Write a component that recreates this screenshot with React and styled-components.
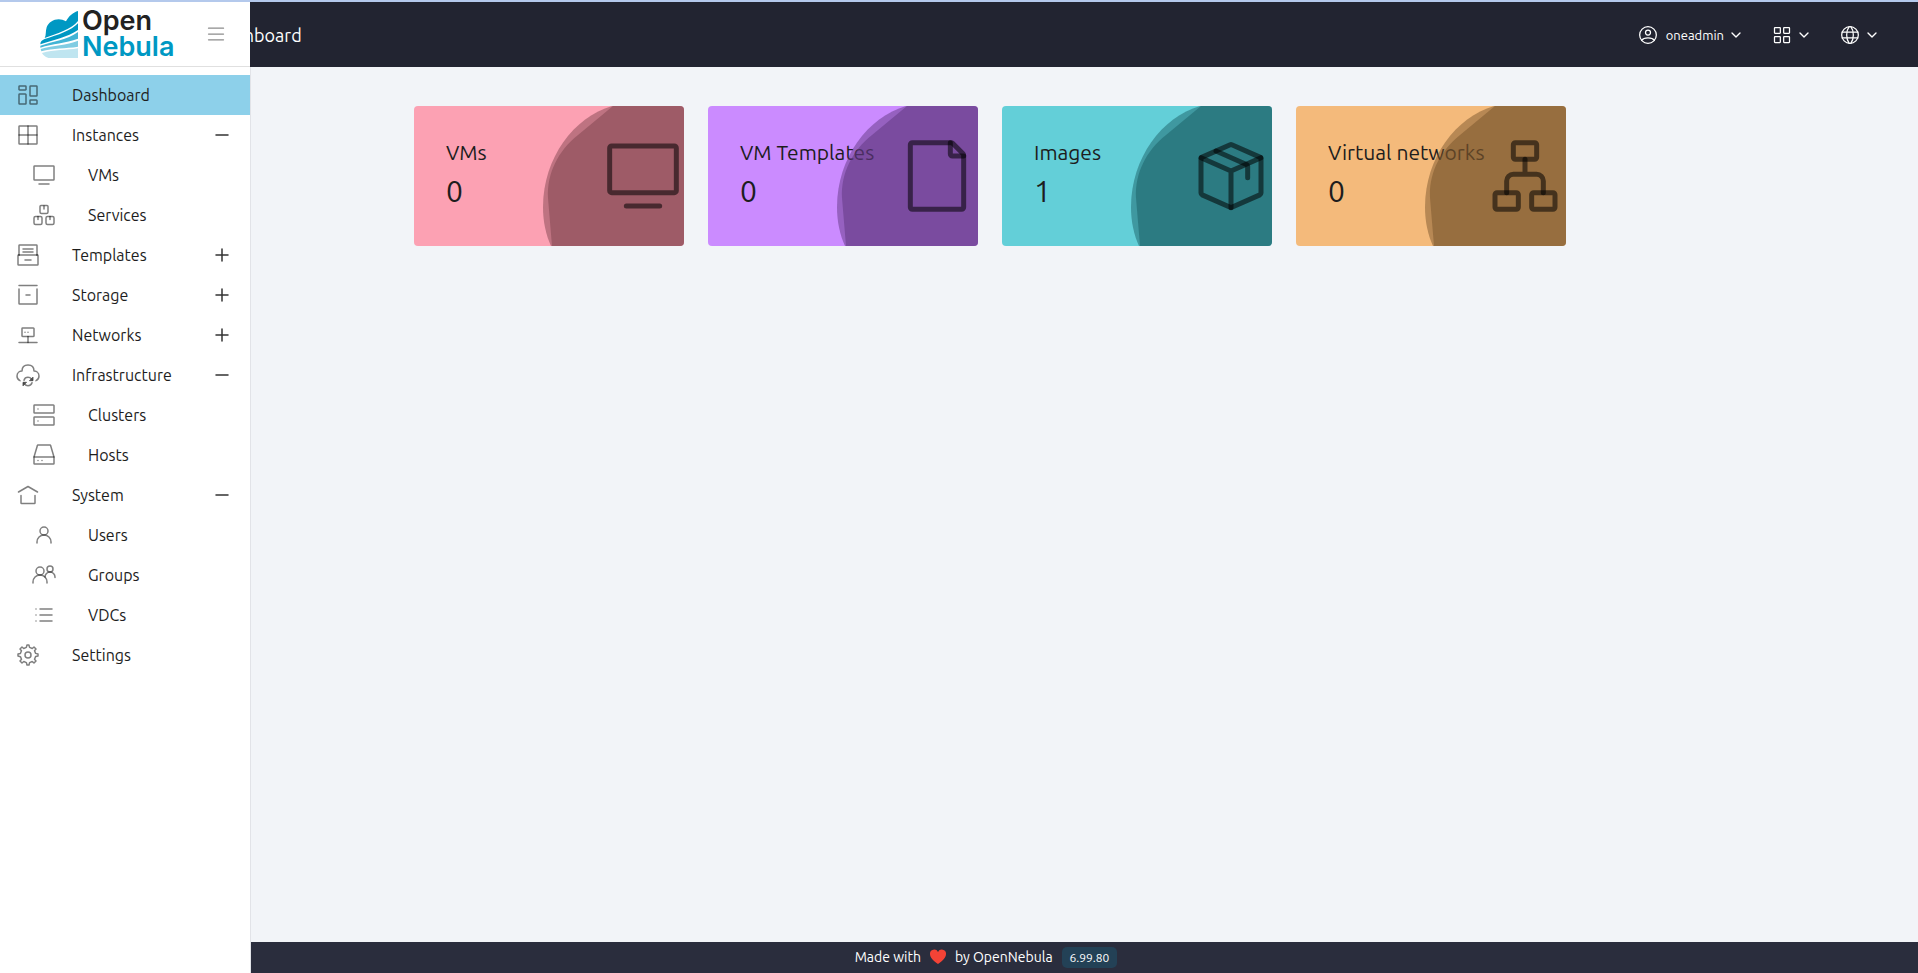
import React from "react";
import styled, { createGlobalStyle } from "styled-components";

const GlobalStyle = createGlobalStyle`
  *, *::before, *::after { box-sizing: border-box; }
  body {
    margin: 0;
    font-family: "Ubuntu", "Noto Sans", sans-serif;
    color: #1d1d1d;
    background: #f2f4f8;
  }
  button { font: inherit; color: inherit; background: none; border: 0; padding: 0; cursor: pointer; }
  a { color: inherit; text-decoration: none; }
  ul { list-style: none; margin: 0; padding: 0; }
`;

const Page = styled.div`
  min-height: 100vh;
  display: flex;
  flex-direction: column;
  padding-left: 62px;
  border-top: 2px solid #b4c9ec;
`;

const Header = styled.header`
  height: 65px;
  margin-left: -62px;
  padding: 0 38px 0 214px;
  display: flex;
  align-items: center;
  justify-content: space-between;
  background: #222431;
  color: #fff;
`;

const Title = styled.h1`
  margin: 0;
  font-size: 18px;
  line-height: 24px;
  font-weight: 400;
`;

const Actions = styled.div`
  display: flex;
  gap: 28px;
`;

const ActionButton = styled.button`
  display: flex;
  align-items: center;
  gap: 4px;
  font-size: 13px;
  line-height: 20px;
`;

const UserName = styled.span`
  margin-left: 4px;
`;

const Main = styled.main`
  flex: 1;
  width: 100%;
  max-width: 1200px;
  margin: 0 auto;
  padding: 39px 24px;
`;

const Cards = styled.div`
  display: grid;
  grid-template-columns: repeat(4, 1fr);
  gap: 24px;
`;

const Card = styled.a`
  position: relative;
  overflow: hidden;
  display: block;
  height: 140px;
  padding: 30px 32px;
  border-radius: 4px;
  background: ${(p) => p.$bg};
`;

const CardTitle = styled.h2`
  margin: 0;
  font-size: 21px;
  line-height: 32px;
  font-weight: 400;
  white-space: nowrap;
`;

const CardValue = styled.p`
  margin: 0;
  font-size: 30px;
  line-height: 46px;
`;

const CardShade = styled.svg`
  position: absolute;
  top: 0;
  right: 0;
  width: 142px;
  height: 140px;
`;

const CardIcon = styled.svg`
  position: absolute;
  top: 30px;
  right: 1px;
  width: 80px;
  height: 80px;
  fill: none;
  stroke: rgba(0, 0, 0, 0.54);
  stroke-width: 1.5;
  stroke-linecap: round;
  stroke-linejoin: round;
`;

const Footer = styled.footer`
  height: 31px;
  margin-left: -62px;
  padding: 0 0 1px 54px;
  display: flex;
  align-items: center;
  justify-content: center;
  background: #2a2d3d;
  color: #fff;
  font-size: 14px;
`;

const Heart = styled.svg`
  width: 16px;
  height: 16px;
  margin: 0 9px;
`;

const Version = styled.span`
  margin-left: 9px;
  padding: 0 8px;
  border-radius: 5px;
  background: #234156;
  font-size: 12px;
  line-height: 21px;
`;

const Sidebar = styled.aside`
  position: fixed;
  top: 2px;
  bottom: 0;
  left: 0;
  width: 250px;
  display: flex;
  flex-direction: column;
  background: #fff;
`;

const SidebarHead = styled.div`
  height: 65px;
  padding: 0 24px 0 40px;
  display: flex;
  align-items: center;
  justify-content: space-between;
  border-bottom: 1px solid #e0e0e0;
`;

const MenuToggle = styled.button`
  display: flex;
`;

const Logo = styled.a`
  display: flex;
  align-items: center;
  gap: 4px;
`;

const LogoMark = styled.svg`
  width: 38px;
  height: 47px;
`;

const LogoText = styled.span`
  display: flex;
  flex-direction: column;
  font-family: "Inter", sans-serif;
  font-size: 27px;
  line-height: 26px;
  font-weight: 600;
  color: ${(p) => p.$color};
`;

const Nav = styled.nav`
  flex: 1;
  box-shadow: 1px 0 0 #e2e3e8;
`;

const Menu = styled.ul`
  padding-top: 8px;
`;

const Item = styled.a`
  height: 40px;
  padding: 0 16px 0 ${(p) => (p.$sub ? 32 : 16)}px;
  display: flex;
  align-items: center;
  gap: 32px;
  background: ${(p) => (p.$active ? "#8dd0ea" : "transparent")};
  font-size: 16px;
  line-height: 24px;
`;

const Label = styled.span`
  flex: 1;
`;

const Svg = styled.svg`
  flex: none;
  width: ${(p) => p.$size}px;
  height: ${(p) => p.$size}px;
  fill: none;
  stroke: ${(p) => p.$tone};
  stroke-width: ${(p) => p.$weight};
  stroke-linecap: round;
  stroke-linejoin: round;
`;

const lines = (...ds) => ds.map((d) => <path key={d} d={d} />);

const icons = {
  dashboard: lines(
    "M3.6 3h5.8a.6.6 0 01.6.6v2.8a.6.6 0 01-.6.6H3.6a.6.6 0 01-.6-.6V3.6a.6.6 0 01.6-.6z",
    "M14.6 17h5.8a.6.6 0 01.6.6v2.8a.6.6 0 01-.6.6h-5.8a.6.6 0 01-.6-.6v-2.8a.6.6 0 01.6-.6z",
    "M14.6 3h5.8a.6.6 0 01.6.6v8.8a.6.6 0 01-.6.6h-5.8a.6.6 0 01-.6-.6V3.6a.6.6 0 01.6-.6z",
    "M3.6 11h5.8a.6.6 0 01.6.6v8.8a.6.6 0 01-.6.6H3.6a.6.6 0 01-.6-.6v-8.8a.6.6 0 01.6-.6z"
  ),
  instances: lines(
    "M3.6 3h16.8a.6.6 0 01.6.6v16.8a.6.6 0 01-.6.6H3.6a.6.6 0 01-.6-.6V3.6a.6.6 0 01.6-.6z",
    "M12 3v18",
    "M3 12h18"
  ),
  monitor: lines(
    "M7 21h10",
    "M2 16.4V3.6a.6.6 0 01.6-.6h18.8a.6.6 0 01.6.6v12.8a.6.6 0 01-.6.6H2.6a.6.6 0 01-.6-.6z"
  ),
  services: lines(
    "M9 2.5h6a1 1 0 011 1V9a1.5 1.5 0 01-1.5 1.5h-5A1.5 1.5 0 018 9V3.500a1 1 0 011-1z",
    "M3.5 13.5h5a1.5 1.5 0 011.5 1.5v5a1.5 1.5 0 01-1.5 1.5h-5A1.5 1.5 0 012 20v-5a1.5 1.5 0 011.5-1.5z",
    "M15.5 13.5h5A1.5 1.5 0 0122 15v5a1.5 1.5 0 01-1.5 1.5h-5A1.5 1.5 0 0114 20v-5a1.5 1.5 0 011.5-1.5z",
    "M12 3v3",
    "M6 13.5v3",
    "M18 13.5v3"
  ),
  templates: lines(
    "M7 6h10",
    "M7 9h10",
    "M9 17h6",
    "M3 12h-.4a.6.6 0 00-.6.6v8.8a.6.6 0 00.6.6h18.8a.6.6 0 00.6-.6v-8.8a.6.6 0 00-.6-.6H21",
    "M3 12V2.6a.6.6 0 01.6-.6h16.8a.6.6 0 01.6.6V12",
    "M3 12h18"
  ),
  storage: lines("M3 6v14.4a.6.6 0 00.6.6h16.8a.6.6 0 00.6-.6V6", "M3 2.500h18", "M10 12h4"),
  networks: lines(
    "M3 19.500h18",
    "M12 19.500v-6",
    "M6.6 5h10.8a.6.6 0 01.6.6v7.3a.6.6 0 01-.6.6H6.6a.6.6 0 01-.6-.6V5.6a.6.6 0 01.6-.6z",
    "M9 9.300h.01",
    "M12 9.300h.01"
  ),
  infrastructure: (
    <>
      {lines(
        "M20 17.600c1.500-.6 3-1.800 3-4.600 0-4-3.300-5-5-5 0-2 0-6-6-6S6 6 6 8c-1.700 0-5 1-5 5 0 2.800 1.500 4 3 4.600",
        "M8 17.200c.5-1.700 2-2.900 4-2.900 1.500 0 2.700.7 3.500 1.700",
        "M16 19.800c-.5 1.700-2 2.900-4 2.900-1.500 0-2.700-.7-3.500-1.700"
      )}
      <path d="M17 14.500v3.200h-3.200zM7 22.500v-3.200h3.200z" fill="#444" stroke="#444" strokeWidth="0.8" />
    </>
  ),
  clusters: lines(
    "M2.6 2h18.800a.6.6 0 01.6.6v6.800a.6.6 0 01-.6.6H2.6a.6.6 0 01-.6-.6V2.600a.6.6 0 01.6-.6z",
    "M2.6 14h18.8a.6.6 0 01.6.6v6.8a.6.6 0 01-.6.6H2.6a.6.6 0 01-.6-.6v-6.8a.6.6 0 01.6-.6z",
    "M6 6h.01",
    "M6 18h.01"
  ),
  hosts: lines(
    "M6 17.500h.01",
    "M10 17.500h.01",
    "M2 14h20v6.400a.6.6 0 01-.6.6H2.6a.6.6 0 01-.6-.6z",
    "M2 14L5.400 2.500a.6.6 0 01.6-.5h12a.6.6 0 01.6.5L22 14"
  ),
  system: lines("M2.500 9L12 3.500l9.500 5.500", "M5 12.500v7.400a.6.6 0 00.6.6h12.8a.6.6 0 00.6-.6v-7.400"),
  user: lines("M5 20v-1a7 7 0 017-7v0a7 7 0 017 7v1", "M12 12a4 4 0 100-8 4 4 0 000 8z"),
  groups: lines(
    "M1 20v-1a7 7 0 017-7v0a7 7 0 017 7v1",
    "M13 14v0a5 5 0 015-5v0a5 5 0 015 5v.5",
    "M8 12a4 4 0 100-8 4 4 0 000 8z",
    "M18 9a3 3 0 100-6 3 3 0 000 6z"
  ),
  list: lines("M8 6h12", "M4 6h.01", "M4 12h.01", "M4 18h.01", "M8 12h12", "M8 18h12"),
  settings: lines(
    "M12 15a3 3 0 100-6 3 3 0 000 6z",
    "M19.622 10.395l-1.097-2.650L20 6l-2-2-1.735 1.483-2.707-1.113L12.935 2h-1.954l-.632 2.401-2.645 1.115L6 4 4 6l1.453 1.789-1.080 2.657L2 11v2l2.401.656L5.516 16.300 4 18l2 2 1.791-1.460 2.606 1.072L11 22h2l.604-2.387 2.651-1.098C16.697 18.831 18 20 18 20l2-2-1.484-1.750 1.098-2.652 2.386-.620V11l-2.378-.605z"
  ),
  plus: lines("M6 12h6m6 0h-6m0 0V6m0 6v6"),
  minus: lines("M6 12h12"),
  menu: lines("M3 5h18", "M3 12h18", "M3 19h18"),
  chevron: lines("M6 9l6 6 6-6"),
  profile: lines(
    "M12 2C6.477 2 2 6.477 2 12s4.477 10 10 10 10-4.477 10-10S17.523 2 12 2z",
    "M4.271 18.346S6.500 15.500 12 15.500s7.730 2.846 7.730 2.846",
    "M12 12a3 3 0 100-6 3 3 0 000 6z"
  ),
  grid: lines(
    "M14 20.400v-5.800a.6.6 0 01.6-.6h5.800a.6.6 0 01.6.6v5.800a.6.6 0 01-.6.6h-5.800a.6.6 0 01-.6-.6z",
    "M3 20.400v-5.800a.6.6 0 01.6-.6h5.800a.6.6 0 01.6.6v5.800a.6.6 0 01-.6.6H3.600a.6.6 0 01-.6-.6z",
    "M14 9.400V3.600a.6.6 0 01.6-.6h5.800a.6.6 0 01.6.6v5.800a.6.6 0 01-.6.6h-5.800a.6.6 0 01-.6-.6z",
    "M3 9.400V3.600a.6.6 0 01.6-.6h5.800a.6.6 0 01.6.6v5.800a.6.6 0 01-.6.6H3.600a.6.6 0 01-.6-.6z"
  ),
  globe: lines(
    "M2 12c0 5.523 4.477 10 10 10s10-4.477 10-10S17.523 2 12 2 2 6.477 2 12z",
    "M13 2.050S16 6 16 12c0 6-3 9.950-3 9.950",
    "M11 21.950S8 18 8 12c0-6 3-9.950 3-9.950",
    "M2.630 15.500h18.740",
    "M2.630 8.500h18.740"
  ),
  page: lines(
    "M4 21.400V2.600a.6.6 0 01.6-.6h11.652a.6.6 0 01.424.176l3.148 3.148A.6.6 0 0120 5.749V21.400a.6.6 0 01-.6.6H4.600a.6.6 0 01-.6-.6z",
    "M16 2v3.400a.6.6 0 00.6.6H20"
  ),
  box: lines(
    "M3 17.110V6.890a.6.6 0 01.356-.548l8.400-3.734a.6.6 0 01.488 0l8.400 3.734A.6.6 0 0121 6.890v10.220a.6.6 0 01-.356.548l-8.400 3.734a.6.6 0 01-.488 0l-8.400-3.734A.6.6 0 013 17.110z",
    "M3 6.500l9 4 9-4M12 10.500v11",
    "M7.500 4.500l9.144 4.064a.6.6 0 01.356.548V12.500"
  ),
  tree: lines(
    "M3.600 17h5.800a.6.6 0 01.6.6v3.800a.6.6 0 01-.6.6H3.600a.6.6 0 01-.6-.6v-3.800a.6.6 0 01.6-.6z",
    "M14.600 17h5.800a.6.6 0 01.6.6v3.800a.6.6 0 01-.6.6h-5.800a.6.6 0 01-.6-.6v-3.800a.6.6 0 01.6-.6z",
    "M9.100 2h5.800a.6.6 0 01.6.6v3.800a.6.6 0 01-.6.6H9.100a.6.6 0 01-.6-.6V2.600a.6.6 0 01.6-.6z",
    "M6.500 17v-3.500a2 2 0 012-2h7a2 2 0 012 2V17M12 11.500V7"
  ),
};

const Icon = ({ name, size = 24, tone = "currentColor", weight = 1.5 }) => (
  <Svg viewBox="0 0 24 24" $size={size} $tone={tone} $weight={weight} aria-hidden="true">
    {icons[name]}
  </Svg>
);

const menu = [
  { label: "Dashboard", icon: "dashboard", active: true },
  { label: "Instances", icon: "instances", toggle: "minus" },
  { label: "VMs", icon: "monitor", sub: true },
  { label: "Services", icon: "services", sub: true },
  { label: "Templates", icon: "templates", toggle: "plus" },
  { label: "Storage", icon: "storage", toggle: "plus" },
  { label: "Networks", icon: "networks", toggle: "plus" },
  { label: "Infrastructure", icon: "infrastructure", toggle: "minus" },
  { label: "Clusters", icon: "clusters", sub: true },
  { label: "Hosts", icon: "hosts", sub: true },
  { label: "System", icon: "system", toggle: "minus" },
  { label: "Users", icon: "user", sub: true },
  { label: "Groups", icon: "groups", sub: true },
  { label: "VDCs", icon: "list", sub: true },
  { label: "Settings", icon: "settings" },
];

const cards = [
  { title: "VMs", value: 0, icon: "monitor", bg: "#fca1b3", shade: "#7b404b" },
  { title: "VM Templates", value: 0, icon: "page", bg: "#cb8bff", shade: "#5b347c" },
  { title: "Images", value: 1, icon: "box", bg: "#63cfd8", shade: "#195d63" },
  { title: "Virtual networks", value: 0, icon: "tree", bg: "#f4ba7b", shade: "#755229" },
];

export default function App() {
  return (
    <>
      <GlobalStyle />
      <Page>
        <Header>
          <Title>Dashboard</Title>
          <Actions>
            <ActionButton type="button">
              <Icon name="profile" size={20} />
              <UserName>oneadmin</UserName>
              <Icon name="chevron" size={16} weight={2} />
            </ActionButton>
            <ActionButton type="button" aria-label="Views">
              <Icon name="grid" size={20} />
              <Icon name="chevron" size={16} weight={2} />
            </ActionButton>
            <ActionButton type="button" aria-label="Zones">
              <Icon name="globe" size={20} />
              <Icon name="chevron" size={16} weight={2} />
            </ActionButton>
          </Actions>
        </Header>
        <Main>
          <Cards>
            {cards.map((c) => (
              <Card key={c.title} href="#" $bg={c.bg}>
                <CardTitle>{c.title}</CardTitle>
                <CardValue>{c.value}</CardValue>
                <CardShade viewBox="0 0 142 140" fill={c.shade} fillOpacity="0.48" aria-hidden="true">
                  <path d="M70 0C32 11 1 52 1 101C1 116 4 129 9 140H142V0Z" />
                  <path d="M71 0L36 29C16 45 5 67 6 92L10 140H142V0Z" />
                </CardShade>
                <CardIcon viewBox="0 0 24 24" aria-hidden="true">
                  {icons[c.icon]}
                </CardIcon>
              </Card>
            ))}
          </Cards>
        </Main>
        <Footer>
          <span>Made with</span>
          <Heart viewBox="0 0 16 16" role="img" aria-label="love">
            <path
              fill="#f44336"
              d="M8 15C3 11.500 0 8.500 0 5a4.200 4.200 0 018-2 4.200 4.200 0 018 2c0 3.500-3 6.500-8 10z"
            />
          </Heart>
          <a href="#">by OpenNebula</a>
          <Version>6.99.80</Version>
        </Footer>
      </Page>
      <Sidebar>
        <SidebarHead>
          <Logo href="#">
            <LogoMark viewBox="120 27 114 141" aria-hidden="true">
              <path
                fill="#0098c3"
                d="M234 27V57C214 82 174 94 134 108C139 100 136 88 140 76C148 54 176 44 198 58C206 42 220 31 234 27Z"
              />
              <path fill="#0098c3" d="M234 64V84C202 106 160 114 121 127C121 119 126 114 134 111C174 99 214 86 234 64Z" />
              <path fill="#42b4d5" d="M234 90V110C196 124 158 124 121 137V131C160 118 200 114 234 90Z" />
              <path fill="#80cce2" d="M234 116V134C196 140 160 138 124 148L122 141C160 129 200 130 234 116Z" />
              <path fill="#bfe5f0" d="M234 139V168H150C138 168 130 160 126 153C162 143 200 145 234 139Z" />
            </LogoMark>
            <span>
              <LogoText $color="#222">Open</LogoText>
              <LogoText $color="#0098c3">Nebula</LogoText>
            </span>
          </Logo>
          <MenuToggle type="button" aria-label="Toggle menu">
            <Icon name="menu" size={20} tone="#8c8c8c" />
          </MenuToggle>
        </SidebarHead>
        <Nav>
          <Menu>
            {menu.map((m) => (
              <li key={m.label}>
                <Item href="#" $sub={m.sub} $active={m.active}>
                  <Icon name={m.icon} tone="rgba(0, 0, 0, 0.5)" />
                  <Label>{m.label}</Label>
                  {m.toggle && <Icon name={m.toggle} tone="#333" />}
                </Item>
              </li>
            ))}
          </Menu>
        </Nav>
      </Sidebar>
    </>
  );
}
